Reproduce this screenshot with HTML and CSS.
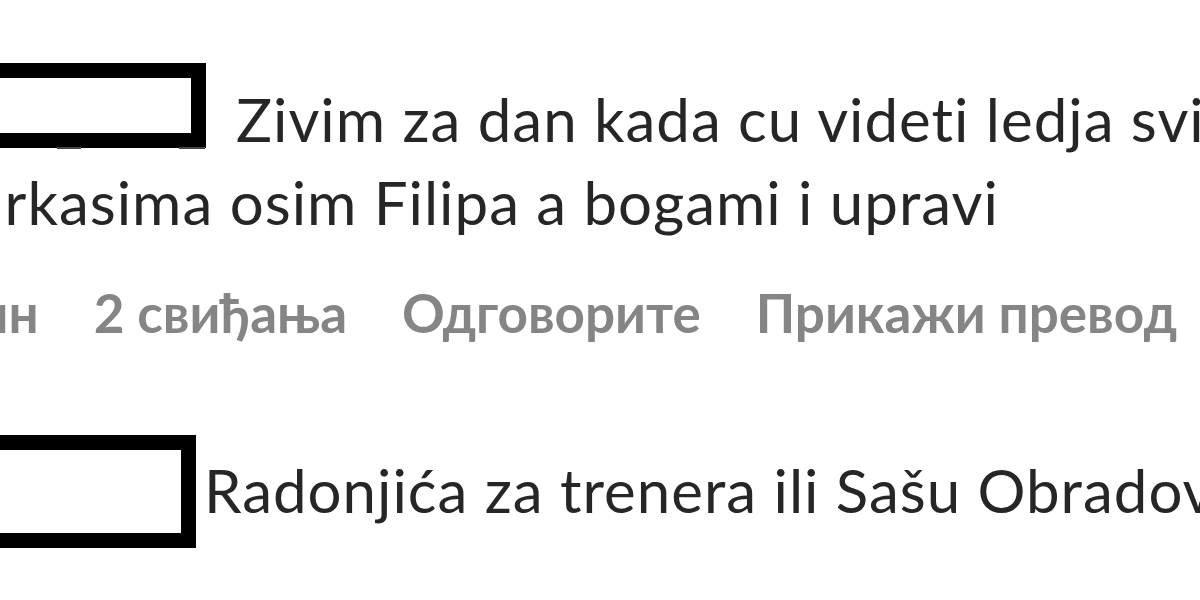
FILE: index.html
```html
<!DOCTYPE html>
<html lang="sr">
<head>
  <meta charset="UTF-8">
  <title>Komentari</title>
  <link rel="stylesheet" href="styles.css">
</head>
<body>

<div class="comments">
  <!-- comment 1 -->
  <div class="comment first">
    <span class="user"></span>Zivim za dan kada cu videti ledja svim<br>košarkasima osim Filipa a bogami i upravi
  </div>
  <div class="meta">
    <span>5 мин</span>
    <span>2 свиђања</span>
    <span>Одговорите</span>
    <span>Прикажи превод</span>
    <span>⋯</span>
  </div>

  <!-- comment 2 -->
  <div class="comment second">
    <span class="user tall"></span>Radonjića za trenera ili Sašu Obradovića
  </div>
</div>

</body>
</html>
```

FILE: styles.css
```css
body {
  margin: 0;
  background: #fff;
  overflow: hidden;
  font-family: Lato, "Open Sans", sans-serif;
  font-variant-ligatures: none;
}

.comments {
  margin-left: -118px;
  width: 1500px;
}

.comment {
  font-size: 60px;
  line-height: 83px;
  letter-spacing: 1px;
  color: #262626;
  white-space: nowrap;
}

.first {
  margin-top: 78px;
}

.second {
  margin-top: 106px;
}

.user {
  display: inline-block;
  position: relative;
  box-sizing: border-box;
  width: 324px;
  height: 85px;
  margin-top: -20px;
  margin-right: 30px;
  border: 15px solid #000;
  vertical-align: -6px;
}

.first .user::before,
.first .user::after {
  content: "";
  position: absolute;
  bottom: -16px;
  height: 2px;
  background: #444;
}

.first .user::before {
  left: 160px;
  width: 24px;
}

.first .user::after {
  right: -14px;
  width: 26px;
}

.user.tall {
  width: 314px;
  height: 113px;
  margin-right: 8px;
  vertical-align: -35px;
}

.meta {
  display: flex;
  gap: 55px;
  margin-top: 39px;
  padding-left: 14px;
  font-size: 53px;
  line-height: 60px;
  font-weight: 700;
  color: #858585;
  white-space: nowrap;
}
```
